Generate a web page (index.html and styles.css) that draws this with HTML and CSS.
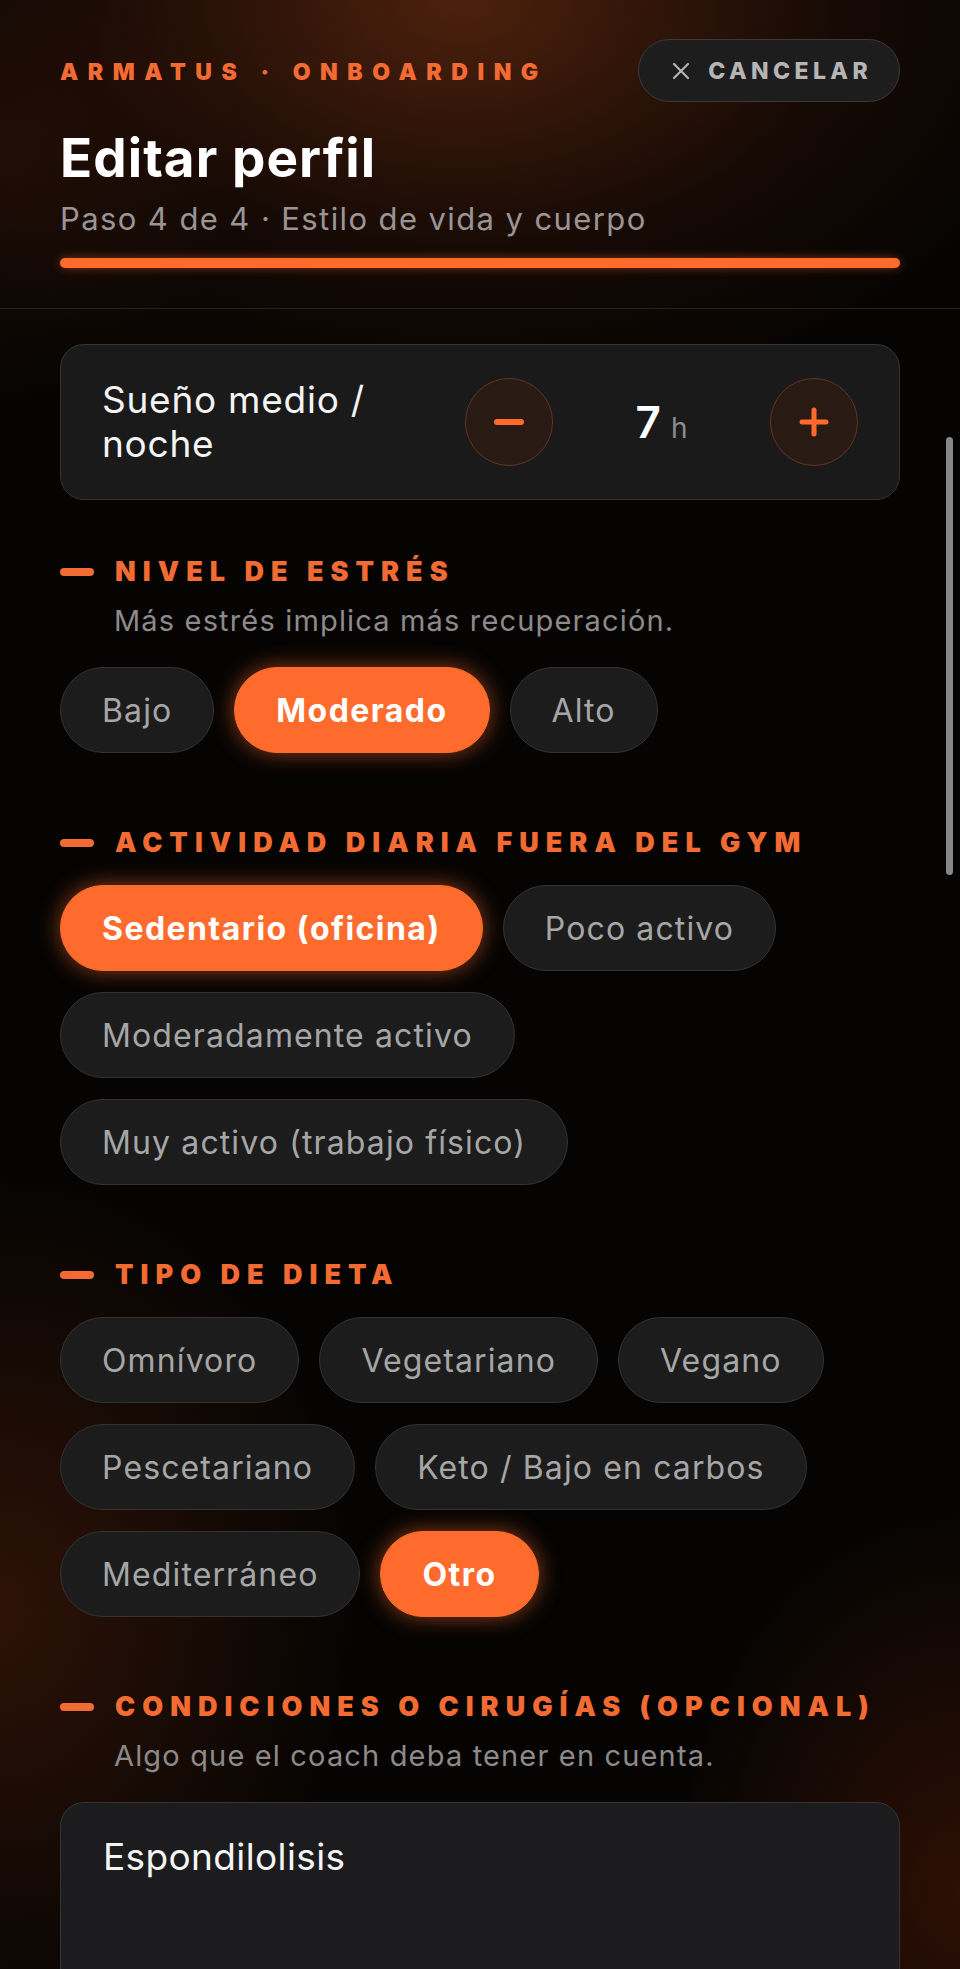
FILE: index.html
```
<!DOCTYPE html>
<html lang="es">
<head>
  <meta charset="utf-8">
  <title>Editar perfil - Armatus</title>
  <link rel="stylesheet" href="styles.css">
</head>
<body>
  <div class="screen">
    <header class="top">
      <div class="top-row">
        <div class="brand">ARMATUS · ONBOARDING</div>
        <button class="cancel" type="button">
          <svg width="18" height="18" viewBox="0 0 18 18"><path d="M2 2 L16 16 M16 2 L2 16" stroke="#b3b3b3" stroke-width="2.2" stroke-linecap="round"/></svg>
          <span>CANCELAR</span>
        </button>
      </div>
      <h1>Editar perfil</h1>
      <div class="step">Paso 4 de 4 · Estilo de vida y cuerpo</div>
      <div class="progress"><div class="progress-fill" style="width: 100%"></div></div>
    </header>

    <main class="content">
      <div class="card">
        <div class="card-label">Sueño medio / noche</div>
        <div class="stepper">
          <button class="round" type="button">
            <svg width="30" height="30" viewBox="0 0 30 30"><path d="M3 15 H27" stroke="#ff6b2c" stroke-width="6" stroke-linecap="round"/></svg>
          </button>
          <div class="value"><span class="num">7</span><span class="unit">h</span></div>
          <button class="round" type="button">
            <svg width="30" height="30" viewBox="0 0 30 30"><path d="M3 15 H27 M15 3 V27" stroke="#ff6b2c" stroke-width="5" stroke-linecap="round"/></svg>
          </button>
        </div>
      </div>

      <section class="section section-first">
        <h2 class="section-title"><span class="dash"></span>NIVEL DE ESTRÉS</h2>
        <p class="hint">Más estrés implica más recuperación.</p>
        <div class="options">
          <span class="chip">Bajo</span>
          <span class="chip active">Moderado</span>
          <span class="chip">Alto</span>
        </div>
      </section>

      <section class="section">
        <h2 class="section-title"><span class="dash"></span>ACTIVIDAD DIARIA FUERA DEL GYM</h2>
        <div class="options">
          <span class="chip active">Sedentario (oficina)</span>
          <span class="chip">Poco activo</span>
          <span class="chip">Moderadamente activo</span>
          <span class="chip">Muy activo (trabajo físico)</span>
        </div>
      </section>

      <section class="section">
        <h2 class="section-title"><span class="dash"></span>TIPO DE DIETA</h2>
        <div class="options">
          <span class="chip">Omnívoro</span>
          <span class="chip">Vegetariano</span>
          <span class="chip">Vegano</span>
          <span class="chip">Pescetariano</span>
          <span class="chip">Keto / Bajo en carbos</span>
          <span class="chip">Mediterráneo</span>
          <span class="chip active">Otro</span>
        </div>
      </section>

      <section class="section">
        <h2 class="section-title"><span class="dash"></span>CONDICIONES O CIRUGÍAS (OPCIONAL)</h2>
        <p class="hint">Algo que el coach deba tener en cuenta.</p>
        <textarea class="notes">Espondilolisis</textarea>
      </section>
    </main>

    <div class="scroll-thumb"></div>
  </div>
</body>
</html>
```

FILE: styles.css
```
* {
  box-sizing: border-box;
}
html {
  background: #050403;
}
body {
  margin: 0;
  font-family: "Inter", "Noto Sans", sans-serif;
  color: #f2f2f2;
  background:
    radial-gradient(ellipse 640px 420px at 48% 0%, rgba(125, 52, 20, 0.6), rgba(60, 22, 8, 0.3) 60%, transparent 100%),
    radial-gradient(ellipse 300px 320px at 0% 8%, rgba(70, 28, 10, 0.35), transparent 80%),
    radial-gradient(ellipse 520px 640px at 0% 80%, rgba(95, 36, 12, 0.45), transparent 70%),
    radial-gradient(ellipse 420px 560px at 100% 94%, rgba(100, 32, 10, 0.42), transparent 70%),
    #050403;
  min-height: 1969px;
}
.screen {
  position: relative;
  padding: 0 60px;
}

/* header */
.top {
  margin: 0 -60px;
  padding: 39px 60px 40px;
  border-bottom: 1px solid #2a211d;
}
.top-row {
  display: flex;
  align-items: center;
  justify-content: space-between;
}
.brand {
  font-size: 23px;
  font-weight: 900;
  letter-spacing: 0.415em;
  color: #f26b32;
  padding-top: 2px;
}
.cancel {
  display: flex;
  align-items: center;
  gap: 18px;
  height: 63px;
  padding: 0 27px 0 33px;
  border: 1.5px solid #3c3a39;
  border-radius: 32px;
  background: #1d1d1e;
  color: #b5b5b5;
  font-family: inherit;
  font-size: 23px;
  font-weight: 800;
  letter-spacing: 0.19em;
}
h1 {
  margin: 26px 0 0;
  font-size: 53px;
  line-height: 60px;
  font-weight: 700;
  letter-spacing: 0.02em;
  color: #ffffff;
}
.step {
  margin-top: 13px;
  font-size: 31px;
  line-height: 36px;
  letter-spacing: 0.045em;
  color: #9a9594;
}
.progress {
  margin-top: 21px;
  height: 10px;
  border-radius: 5px;
  background: #2a2220;
}
.progress-fill {
  height: 100%;
  border-radius: 5px;
  background: #ff6b2c;
  box-shadow: 0 0 10px rgba(255, 107, 44, 0.45);
}

/* content */
.content {
  padding-top: 35px;
}
.card {
  display: flex;
  align-items: center;
  height: 156px;
  padding: 0 41px;
  border: 1.5px solid #363434;
  border-radius: 24px;
  background: #1b1a1b;
}
.card-label {
  flex: 1;
  max-width: 290px;
  font-size: 37px;
  line-height: 44px;
  letter-spacing: 0.02em;
  color: #f4f4f4;
}
.stepper {
  display: flex;
  align-items: center;
  margin-left: auto;
}
.round {
  display: flex;
  align-items: center;
  justify-content: center;
  width: 88px;
  height: 88px;
  padding: 0;
  border: 1.5px solid #653220;
  border-radius: 50%;
  background: #2a1a14;
}
.value {
  width: 217px;
  text-align: center;
}
.num {
  font-size: 44px;
  font-weight: 600;
  color: #ffffff;
}
.unit {
  margin-left: 10px;
  font-size: 28px;
  color: #8c8c8c;
}

.section {
  margin-top: 76px;
}
.section-first {
  margin-top: 58px;
}
.section-title {
  display: flex;
  align-items: center;
  margin: 0;
  font-size: 27px;
  line-height: 28px;
  font-weight: 900;
  letter-spacing: 0.26em;
  color: #f26b32;
}
.dash {
  width: 34px;
  height: 8px;
  margin-right: 21px;
  border-radius: 4px;
  background: #f26b32;
}
.hint {
  margin: 18px 0 0 54px;
  font-size: 29px;
  line-height: 34px;
  letter-spacing: 0.04em;
  color: #8e8a89;
}
.options {
  display: flex;
  flex-wrap: wrap;
  gap: 21px 20px;
  margin-top: 28px;
}
.hint + .options {
  margin-top: 29px;
}
.chip {
  display: inline-flex;
  align-items: center;
  height: 86px;
  padding: 0 41px;
  border: 1.5px solid #343233;
  border-radius: 43px;
  background: #1c1c1d;
  font-size: 32px;
  letter-spacing: 0.035em;
  color: #a6a6a6;
}
.chip.active {
  border-color: #ff6b2c;
  background: #ff6b2c;
  color: #ffffff;
  font-weight: 700;
  letter-spacing: 0.045em;
  box-shadow: 0 0 22px rgba(255, 107, 44, 0.55);
}
.notes {
  display: block;
  width: 100%;
  height: 210px;
  margin-top: 29px;
  padding: 32px 42px;
  border: 1.5px solid #363434;
  border-radius: 24px;
  background: #1c1b1d;
  color: #f4f4f4;
  font-family: inherit;
  font-size: 37px;
  line-height: 44px;
  letter-spacing: 0.01em;
  resize: none;
  outline: none;
}

.scroll-thumb {
  position: absolute;
  top: 437px;
  right: 7px;
  width: 7px;
  height: 438px;
  border-radius: 4px;
  background: #878787;
}
```
